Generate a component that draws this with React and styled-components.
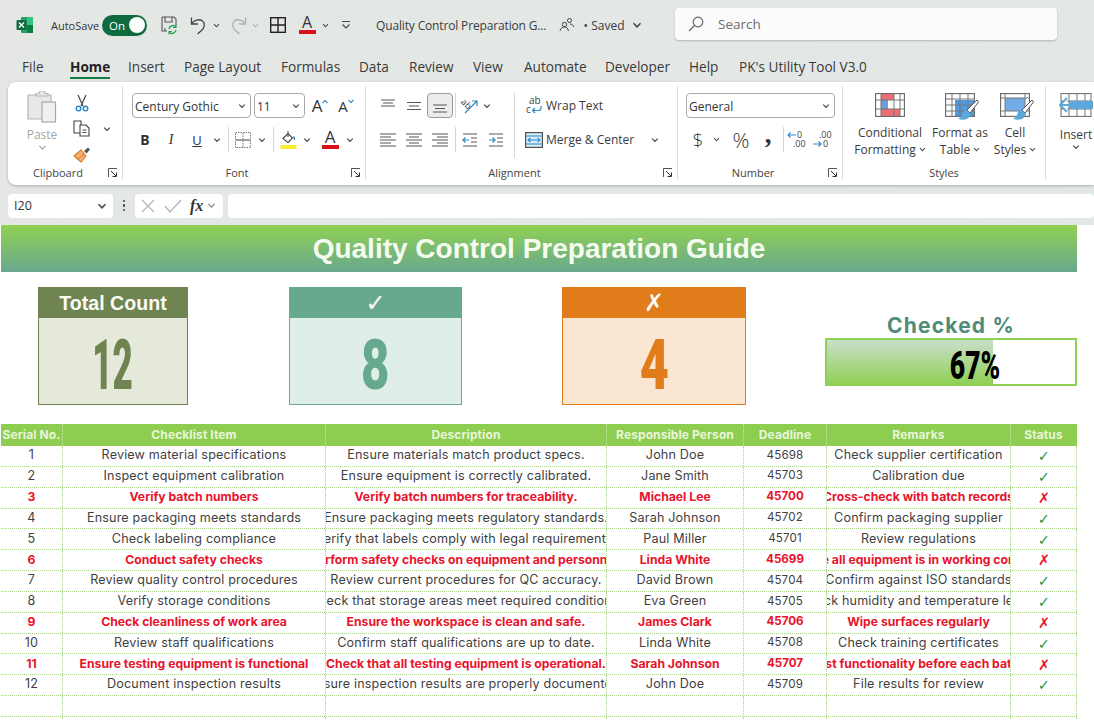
import React from "react";
import styled, { createGlobalStyle } from "styled-components";

const Global = createGlobalStyle`
  html, body { margin: 0; padding: 0; background: #fff; }
  body { width: 1094px; height: 720px; overflow: hidden; font-family: "Open Sans", "Noto Sans", sans-serif; color: #3a3a3a; }
  * { box-sizing: border-box; }
`;

const Page = styled.div`width: 1094px; height: 720px; overflow: hidden; display: flex; flex-direction: column; background: #fff;`;
const Chrome = styled.header`background: linear-gradient(90deg, #e4e7e4, #e2e8e6); flex: none;`;

const TitleBar = styled.div`height: 48px; display: flex; align-items: center; padding: 2px 0 0 16px;`;
const Slot = styled.span`
  flex: none; display: inline-flex; align-items: center; justify-content: ${p => p.$align || "center"};
  width: ${p => p.$w}px; margin-left: ${p => p.$ml || 0}px; height: ${p => p.$h || 24}px;
  font-size: ${p => p.$fs || 12}px; font-weight: ${p => p.$fw || 400}; color: ${p => p.$c || "#333"}; white-space: nowrap;
`;
const Toggle = styled.span`
  flex: none; width: 45px; height: 21px; border-radius: 11px; background: #0f6b3f; color: #fff; font-size: 11.5px;
  display: flex; align-items: center; justify-content: space-between; padding: 0 2px 0 7px;
  &::after { content: ""; width: 16px; height: 16px; border-radius: 50%; background: #fff; }
`;
const DocName = styled.span`flex: none; width: 172px; margin-left: 22px; font-size: 12px; letter-spacing: -.15px; color: #3c3c3c; white-space: nowrap;`;
const SearchBox = styled.div`
  flex: none; width: 382px; height: 32px; margin-left: 32px; margin-top: -2px; border-radius: 4px; background: #fbfbfb;
  box-shadow: 0 1px 2px rgba(0,0,0,.22); display: flex; align-items: center; padding-left: 13px; gap: 14px; color: #6d6d6d; font-size: 13.5px;
`;

const Tabs = styled.nav`height: 34px; display: flex; align-items: flex-start; padding: 9px 0 0 22px;`;
const Tab = styled.span`flex: none; width: ${p => p.$w}px; font-size: 13.6px; line-height: 20px; color: #3a3a3a;`;
const ActiveTab = styled(Tab)`
  font-weight: 700; color: #222;
  span { display: inline-block; border-bottom: 2.5px solid #107c41; }
`;

const RibbonWrap = styled.div`padding-left: 8px; height: 103px;`;
const Ribbon = styled.div`
  height: 103px; background: #fff; border-radius: 8px 0 0 8px; box-shadow: 0 1px 3px rgba(0,0,0,.25);
  display: flex; padding: 4px 0 5px; overflow: hidden;
`;
const Group = styled.section`
  flex: none; width: ${p => p.$w}px; display: flex; flex-direction: column;
  border-right: ${p => p.$last ? "none" : "1px solid #dcdcdc"};
`;
const GroupBody = styled.div`flex: 1; display: flex; padding: 7px 0 0 ${p => p.$pl || 0}px; min-height: 0;`;
const GroupFoot = styled.footer`height: 15px; display: flex; align-items: center; font-size: 11px; color: #444;`;
const GroupLabel = styled.span`flex: 1; text-align: center;`;
const Launcher = styled.span`flex: none; width: 14px; display: flex; align-items: center;`;
const Stack = styled.div`display: flex; flex-direction: column; gap: 9px; width: ${p => p.$w ? p.$w + "px" : "auto"}; height: ${p => p.$h ? p.$h + "px" : "auto"}; ${p => p.$divider ? "border-right:1px solid #d8d8d8;" : ""} ${p => p.$pl ? `padding-left:${p.$pl}px;` : ""}`;
const Row = styled.div`display: flex; align-items: center; height: 25px;`;
const Select = styled.div`
  flex: none; width: ${p => p.$w}px; height: 25px; margin-right: ${p => p.$mr || 0}px; border: 1px solid #a9a9a9; border-radius: 4px;
  display: flex; align-items: center; justify-content: space-between; padding: 1px 4px 0 2px; font-size: 12px; color: #333;
`;
const VSep = styled.span`flex: none; width: 1px; height: 25px; background: #d8d8d8; margin: 0 ${p => p.$m || 2}px;`;
const Selected = styled(Slot)`background: #ececec; border: 1px solid #9a9a9a; border-radius: 4px; height: 25px;`;
const PasteCol = styled.div`flex: none; width: 54px; margin-left: 7px; display: flex; flex-direction: column; align-items: center; margin-top: -2px; font-size: 12px; color: #a4a4a4;`;
const PasteLabel = styled.span`margin-top: 4px; line-height: 16px;`;
const ToolCol = styled.div`flex: none; display: flex; flex-direction: column; margin-top: -3px;`;
const BigBtn = styled.div`
  flex: none; width: ${p => p.$w}px; display: flex; flex-direction: column; align-items: center; font-size: 12px; line-height: 17px; color: #3a3a3a; white-space: nowrap;
`;
const BigBtnIcon = styled.span`height: ${p => p.$h || 31}px; display: flex; align-items: flex-start;`;
const WrapLabel = styled.span`font-size: 12px; color: #3a3a3a; margin-left: 3px; white-space: nowrap;`;
const Comma = styled.span`font: 700 27px/10px "Liberation Serif", serif; margin-top: -12px;`;
const BtnLine = styled.span`display: inline-flex; align-items: center; gap: 3px;`;

const FormulaBar = styled.div`height: 40px; display: flex; align-items: center; padding-left: 8px; padding-top: 1px;`;
const FBox = styled.div`
  flex: none; height: 24px; width: ${p => p.$w}px; margin-left: ${p => p.$ml || 0}px; background: #fff; border-radius: 4px; display: flex; align-items: center; font-size: 12.5px; color: #333;
  padding: 0 6px; justify-content: ${p => p.$j || "flex-start"};
`;
const FxBox = styled(FBox)`gap: 0; padding: 0 3px 0 5px;`;
const Dots = styled.span`flex: none; width: 22px; display: flex; justify-content: center; flex-direction: column; align-items: center; gap: 2px;
  i { width: 2.5px; height: 2.5px; background: #444; border-radius: 50%; display: block; }`;
const Fx = styled.span`font-family: "Liberation Serif", serif; font-style: italic; font-weight: 700; font-size: 16px; color: #333; margin: 0 4px 0 8px;`;

const Sheet = styled.main`flex: 1; min-height: 0; background: #fff; overflow: hidden; padding-left: 1px;`;
const Banner = styled.h1`
  margin: 0; width: 1076px; height: 47px; background: linear-gradient(180deg, #90d152, #68a88f);
  color: #f6fbf0; font: 700 28px/47px "Liberation Sans", Arial, sans-serif; text-align: center;
`;
const Kpis = styled.div`display: flex; height: 118px; margin: 15px 0 19px; padding-left: 37px;`;
const Card = styled.div`
  flex: none; width: ${p => p.$w}px; margin-right: ${p => p.$mr}px; height: 118px; background: ${p => p.$bg}; border: 1px solid ${p => p.$c}; display: flex; flex-direction: column; color: ${p => p.$c};
`;
const CardHead = styled.div`
  flex: none; height: 30px; background: ${p => p.$c}; color: #fbfbf6; text-align: center;
  font: 700 ${p => p.$symbol ? 24 : 19.6}px/30px ${p => p.$symbol ? '"DejaVu Sans"' : '"Liberation Sans"'}, sans-serif;
`;
const CardValue = styled.div`flex: 1; display: flex; align-items: center; justify-content: center; padding-top: 8px;`;
const Condensed = styled.span`
  display: inline-block; font-family: "Roboto", sans-serif; font-weight: 900; font-size: ${p => p.$fs}px; line-height: 1; transform: scaleX(${p => p.$sx}); color: ${p => p.$c || "inherit"};
`;
const Progress = styled.div`flex: none; width: 252px; display: flex; flex-direction: column; align-items: center; margin-top: 26px;`;
const ProgressTitle = styled.div`font: 700 21px/25px "Inter", sans-serif; color: #4f8c78; letter-spacing: 1.2px;`;
const Track = styled.div`width: 252px; height: 48px; border: 2px solid #8fd055; background: #fff; display: flex; align-items: stretch; position: relative;`;
const Fill = styled.div`height: 100%; background: linear-gradient(180deg, #c9dfca, #8fd055); flex: none;`;
const TrackLabel = styled.div`position: absolute; top: 7px; left: 0; right: 0; display: flex; justify-content: center; padding-left: 48px;`;

const Table = styled.div`width: 1076px;`;
const cols = "62px 263px 281px 137px 83px 184px 66px";
const HeadRow = styled.div`display: grid; grid-template-columns: ${cols}; height: 22px; background: #8dce51;`;
const HeadCell = styled.div`
  display: flex; align-items: center; justify-content: center; white-space: nowrap; overflow: hidden; color: #eaf6da;
  font: 700 12px/1 "Inter", sans-serif; letter-spacing: .1px; border-right: 1px dotted #c9e8a8;
  &:last-child { border-right: 1px solid #8dce51; }
`;
const BodyRow = styled.div`display: grid; grid-template-columns: ${cols}; height: 20.85px; border-bottom: 1px dotted #a9d78a;`;
const Cell = styled.div`
  display: flex; align-items: center; justify-content: center; overflow: hidden; white-space: nowrap; padding-bottom: 1px;
  border-right: 1px dotted #a9d78a; font: ${p => p.$bad ? 700 : 400} ${p => p.$num ? 11.6 : p.$bad ? 12.2 : 12.6}px/1 "Inter", sans-serif;
  letter-spacing: ${p => p.$bad ? 0 : .16}px; color: ${p => p.$bad ? "#e8142c" : "#3f3f3f"};
  span { flex: none; }
`;
const Mark = styled(Cell)`font: 700 14.5px/1 "DejaVu Sans", sans-serif; color: ${p => p.$bad ? "#e8142c" : "#1d9a4e"}; padding: 1px 0 0 1px;`;

const FontABox = styled.span`display: inline-flex; flex-direction: column; align-items: center;`;
const FontALetter = styled.span`font-size: ${p => p.$s}px; line-height: ${p => p.$s - 3}px; color: #333;`;
const FontABar = styled.span`width: ${p => p.$w}px; height: 4px; background: ${p => p.$c}; display: block; margin-top: 1px;`;
const GrowBox = styled.span`display: inline-flex; align-items: flex-start;`;
const GrowLetter = styled.span`font-size: ${p => p.$up ? 17 : 15}px; line-height: 18px; color: #333;`;
const Bold = styled.span`font: 700 14px "Noto Sans", sans-serif; color: #333;`;
const Ital = styled.span`font: italic 400 14px "Liberation Serif", serif; color: #333;`;
const Under = styled.span`font-size: 13px; color: #333; text-decoration: underline;`;
const BrushOver = styled.span`position: relative; display: inline-flex; height: 24px;`;
const BrushMark = styled.svg`position: absolute; right: -4px; bottom: -5px;`;
const OpenSvg = styled.svg`overflow: visible;`;

const Chev = ({ s = 8, c = "#444" }) => (
  <svg width={s} height={s} viewBox="0 0 10 10" fill="none"><path d="M1.5 3.2 5 6.8l3.5-3.6" stroke={c} strokeWidth="1.5" /></svg>
);
const Excel = () => (
  <svg width="18" height="18" viewBox="0 0 18 18"><rect x="5" y="1" width="12" height="16" rx="1" fill="#21a366" /><rect x="11" y="1" width="6" height="8" fill="#33c481" /><rect x="11" y="9" width="6" height="8" fill="#107c41" /><rect x="0.5" y="4" width="10" height="10" rx="1" fill="#0f6b3f" /><path d="M3 6.5 8 11.5M8 6.5 3 11.5" stroke="#fff" strokeWidth="1.4" /></svg>
);
const SaveSync = () => (
  <svg width="18" height="20" viewBox="0 0 18 20" fill="none" stroke="#555" strokeWidth="1.1"><path d="M2 2h12l2 2v6M2 2v14h5M5 2v5h7V2M5 16v-3" /><path d="M9 14a4 4 0 0 1 7-2M16 15a4 4 0 0 1-7 2" stroke="#2fa45b" strokeWidth="1.4" /><path d="M16 9.5v3h-3M9 19.5v-3h3" stroke="#2fa45b" strokeWidth="1.2" /></svg>
);
const Undo = ({ c = "#444", flip }) => (
  <svg width="16" height="19" viewBox="0 0 16 19" fill="none" stroke={c} strokeWidth="1.3" style={flip ? { transform: "scaleX(-1)" } : undefined}><path d="M1.5 1.5v6.5h6.5" /><path d="M1.5 8C4 4 9 2.5 12.5 5c3 2.5 2 7-1 9.5L7.5 18" /></svg>
);
const GridIcon = () => (
  <svg width="16" height="16" viewBox="0 0 16 16" fill="none" stroke="#222" strokeWidth="1.4"><rect x=".7" y=".7" width="14.6" height="14.6" /><path d="M8 1v14M1 8h14" /></svg>
);
const FontA = ({ size = 16, bar = 17, col = "#d8101c" }) => (
  <FontABox>
    <FontALetter $s={size}>A</FontALetter>
    <FontABar $w={bar} $c={col} />
  </FontABox>
);
const Customize = () => (
  <svg width="10" height="10" viewBox="0 0 10 10" fill="none" stroke="#444" strokeWidth="1.1"><path d="M1 1.5h8M1.5 4.5 5 8l3.5-3.5" /></svg>
);
const People = () => (
  <svg width="16" height="16" viewBox="0 0 16 16" fill="none" stroke="#444" strokeWidth="1"><circle cx="5.5" cy="7.5" r="2.2" /><path d="M1 14c.6-3 2.5-4 4.5-4s3.2 1 4 4" /><circle cx="10.5" cy="3.5" r="2" /><path d="M11 7c1.8 0 3.2.9 3.8 3" /></svg>
);
const SearchIcon = () => (
  <svg width="16" height="16" viewBox="0 0 16 16" fill="none" stroke="#666" strokeWidth="1.2"><circle cx="10" cy="6" r="4.8" /><path d="M6.5 9.5 1 15" /></svg>
);
const PasteIcon = () => (
  <svg width="30" height="32" viewBox="0 0 30 32" fill="none" stroke="#b5b5b5" strokeWidth="1.2"><path d="M6 4h18v24H1V4h5z" fill="#e8e8e8" /><path d="M9 5V2.5h3a3 3 0 0 1 6 0h3V5z" fill="#e8e8e8" /><rect x="15" y="11" width="13.5" height="20" fill="#f0f0f0" stroke="#a9a9a9" /></svg>
);
const Scissors = () => (
  <svg width="14" height="18" viewBox="0 0 14 18" fill="none"><path d="M3 1l5 11M11 1 6 12" stroke="#444" strokeWidth="1.2" /><circle cx="3.5" cy="14.5" r="2.3" stroke="#2b88c6" strokeWidth="1.4" /><circle cx="10.5" cy="14.5" r="2.3" stroke="#2b88c6" strokeWidth="1.4" /></svg>
);
const CopyIcon = () => (
  <svg width="18" height="17" viewBox="0 0 18 17" fill="none" stroke="#444" strokeWidth="1.1"><path d="M1 1h7v12H1z" /><path d="M7 5h6l3 3v8H7z" fill="#fff" /><path d="M9.5 10h4M9.5 12.5h4" /></svg>
);
const Brush = () => (
  <svg width="18" height="17" viewBox="0 0 18 17" fill="none"><path d="M1 10 8 4l5 6-5 6z" fill="#f3b27a" stroke="#d9761c" strokeWidth="1.1" /><path d="M5 13l6-5" stroke="#d9761c" /><path d="M11 5 15 1.5l2 2-3.5 4z" fill="#555" /></svg>
);
const GrowA = ({ up }) => (
  <GrowBox>
    <GrowLetter $up={up}>A</GrowLetter>
    <svg width="6" height="5" viewBox="0 0 6 5" fill="none" stroke="#3a8cc8" strokeWidth="1.1" style={{ marginTop: 2 }}><path d={up ? "M.5 4 3 1.5 5.5 4" : "M.5 1 3 3.5 5.5 1"} /></svg>
  </GrowBox>
);
const BordersIcon = () => (
  <svg width="16" height="16" viewBox="0 0 16 16" fill="none" stroke="#777" strokeWidth="1" strokeDasharray="1.5 1"><rect x=".5" y=".5" width="15" height="15" /><path d="M8 1v14" /><path d="M1 8h14" strokeDasharray="none" stroke="#444" /></svg>
);
const FillIcon = () => (
  <svg width="17" height="19" viewBox="0 0 17 19" fill="none"><path d="M3 8.5 8 3.5l4.5 4.5L8 12.5z" stroke="#444" strokeWidth="1.1" /><path d="M8 1v6" stroke="#444" /><path d="M13.5 6.5c1 1.5 1.5 2.5 1 3.5" stroke="#2b88c6" strokeWidth="1.5" /><rect x=".5" y="15" width="16" height="4" fill="#f8ec30" /></svg>
);
const Lines = ({ rows }) => (
  <svg width="16" height="14" viewBox="0 0 16 14" fill="none" stroke="#555" strokeWidth="1.2">
    {rows.map(([a, b, y], i) => <path key={i} d={`M${a} ${y}H${b}`} />)}
  </svg>
);
const AL = {
  top: [[1, 15, 1], [3, 13, 4], [1, 15, 7]],
  mid: [[1, 15, 3.5], [3, 13, 7], [1, 15, 10.5]],
  bot: [[1, 15, 6], [3, 13, 9.5], [1, 15, 13]],
  left: [[0, 16, 1], [0, 11, 4], [0, 16, 7], [0, 11, 10], [0, 16, 13]],
  center: [[0, 16, 1], [3, 13, 4], [0, 16, 7], [3, 13, 10], [0, 16, 13]],
  right: [[0, 16, 1], [5, 16, 4], [0, 16, 7], [5, 16, 10], [0, 16, 13]],
};
const Orient = () => (
  <OpenSvg width="20" height="20" viewBox="0 0 20 20" fill="none"><path d="M5 17 17 5M12 5h5v5" stroke="#2b88c6" strokeWidth="1.2" /><text x="1" y="11" fontSize="9" fill="#444" fontFamily="Open Sans" transform="rotate(45 6 8)">ab</text></OpenSvg>
);
const Indent = ({ rev }) => (
  <svg width="16" height="14" viewBox="0 0 16 14" fill="none" stroke="#555" strokeWidth="1.2"><path d="M1 1h14M9 5h6M9 9h6M1 13h14" /><path d={rev ? "M1 7h6M3.5 4.5 1 7l2.5 2.5" : "M1 7h6M4.5 4.5 7 7 4.5 9.5"} stroke="#2b88c6" /></svg>
);
const WrapIcon = () => (
  <OpenSvg width="17" height="21" viewBox="0 0 17 21" fill="none"><text x="3" y="9" fontSize="10" fill="#444" fontFamily="Open Sans">ab</text><text x="0" y="18" fontSize="10" fill="#444" fontFamily="Open Sans">c</text><path d="M15 11v2a2.5 2.5 0 0 1-2.5 2.5H7M9 13l-2.5 2.5L9 18" stroke="#2b88c6" strokeWidth="1.2" /></OpenSvg>
);
const MergeIcon = () => (
  <svg width="18" height="16" viewBox="0 0 18 16" fill="none"><rect x=".6" y=".6" width="16.8" height="14.8" stroke="#444" strokeWidth="1.1" fill="#d6ecf9" /><path d="M1 4h16M1 12h16" stroke="#2b88c6" /><path d="M3 8h12M5.5 5.8 3 8l2.5 2.2M12.5 5.8 15 8l-2.5 2.2" stroke="#2b88c6" strokeWidth="1.1" /></svg>
);
const Decimal = ({ more }) => (
  <OpenSvg width="24" height="22" viewBox="0 0 24 22" fill="none">
    <text x={more ? 7 : 11} y="9" fontSize="9" fill="#444" fontFamily="Open Sans">{more ? ".00" : "0"}</text>
    <text x={more ? 11 : 7} y="18" fontSize="9" fill="#444" fontFamily="Open Sans">{more ? "0" : ".00"}</text>
    <path d={more ? "M1 15h8M6.5 12.5 9 15l-2.5 2.5" : "M2 6h8M4.5 3.5 2 6l2.5 2.5"} stroke="#2b88c6" strokeWidth="1.1" />
  </OpenSvg>
);
const LaunchIcon = () => (
  <svg width="10" height="10" viewBox="0 0 10 10" fill="none" stroke="#555" strokeWidth="1"><path d="M.5 9V.5H9" /><path d="M3 3l5 5M8.5 4.5v4h-4" stroke="#333" /></svg>
);
const GridBase = ({ w = 30, h = 24, children, cols = [6, 12, 18, 24], rows = [6, 12, 18] }) => (
  <svg width={w} height={h} viewBox={`0 0 ${w} ${h}`} fill="none">
    {children}
    <rect x=".6" y=".6" width={w - 1.2} height={h - 1.2} stroke="#666" strokeWidth="1.1" />
    {cols.map(x => <path key={x} d={`M${x} 1V${h - 1}`} stroke="#777" />)}
    {rows.map(y => <path key={y} d={`M1 ${y}H${w - 1}`} stroke="#777" />)}
  </svg>
);
const CondIcon = () => (
  <GridBase cols={[6, 19, 25]} rows={[7, 16]}>
    <rect x="6" y="1" width="13" height="6" fill="#f06d78" />
    <rect x="6" y="7" width="7" height="9" fill="#6f9ed6" />
    <rect x="6" y="16" width="19" height="7" fill="#f06d78" />
  </GridBase>
);
const PaintBrush = () => (
  <BrushMark width="26" height="24" viewBox="0 0 26 24" fill="none">
    <path d="M24 2 14 12l3 3L25.5 4z" fill="#fff" stroke="#555" />
    <path d="M14 12c-3 0-4.5 2-5 5-.5 2-2 3-4 3.5 3.500 2 9 1.500 11-1 1.500-2 1.500-4 1-4.500z" fill="#5ca8dd" />
  </BrushMark>
);
const TableIcon = () => (
  <BrushOver>
    <GridBase cols={[7, 15, 23]} rows={[6, 12, 18]}>
      <rect x="10" y="7" width="19" height="16" fill="#4f9be0" />
    </GridBase>
    <PaintBrush />
  </BrushOver>
);
const CellIcon = () => (
  <BrushOver>
    <GridBase cols={[5, 25]} rows={[5, 18]}>
      <rect x="5" y="5" width="20" height="13" fill="#72ace6" />
    </GridBase>
    <PaintBrush />
  </BrushOver>
);
const InsertIcon = () => (
  <svg width="34" height="24" viewBox="0 0 34 24" fill="none">
    <rect x="2" y=".6" width="30" height="22.8" stroke="#666" />
    <path d="M10 1v22M18 1v22M26 1v22M2 8h30M2 16h30" stroke="#777" />
    <rect x="10" y="8" width="24" height="8" fill="#5ca8dd" />
    <path d="M16 12H2M8 5 1 12l7 7" stroke="#5ca8dd" strokeWidth="2" fill="#fff" />
  </svg>
);
const XIcon = () => <svg width="16" height="16" viewBox="0 0 16 16" stroke="#b4b4b4" strokeWidth="1.2"><path d="M2 2l12 12M14 2 2 14" /></svg>;
const CheckIcon = () => <svg width="18" height="14" viewBox="0 0 18 14" fill="none" stroke="#b4b4b4" strokeWidth="1.2"><path d="M1 7l5 6L17 1" /></svg>;

const tabs = [["Insert", 56], ["Page Layout", 97], ["Formulas", 78], ["Data", 50], ["Review", 64], ["View", 51], ["Automate", 81], ["Developer", 84], ["Help", 50], ["PK's Utility Tool V3.0", 140]];
const heads = ["Serial No.", "Checklist Item", "Description", "Responsible Person", "Deadline", "Remarks", "Status"];
const rows = [
  ["Review material specifications", "Ensure materials match product specs.", "John Doe", 45698, "Check supplier certification"],
  ["Inspect equipment calibration", "Ensure equipment is correctly calibrated.", "Jane Smith", 45703, "Calibration due"],
  ["Verify batch numbers", "Verify batch numbers for traceability.", "Michael Lee", 45700, "Cross-check with batch records", 1],
  ["Ensure packaging meets standards", "Ensure packaging meets regulatory standards.", "Sarah Johnson", 45702, "Confirm packaging supplier"],
  ["Check labeling compliance", "Verify that labels comply with legal requirements.", "Paul Miller", 45701, "Review regulations"],
  ["Conduct safety checks", "Perform safety checks on equipment and personnel.", "Linda White", 45699, "Ensure all equipment is in working condition", 1],
  ["Review quality control procedures", "Review current procedures for QC accuracy.", "David Brown", 45704, "Confirm against ISO standards"],
  ["Verify storage conditions", "Check that storage areas meet required conditions.", "Eva Green", 45705, "Check humidity and temperature levels"],
  ["Check cleanliness of work area", "Ensure the workspace is clean and safe.", "James Clark", 45706, "Wipe surfaces regularly", 1],
  ["Review staff qualifications", "Confirm staff qualifications are up to date.", "Linda White", 45708, "Check training certificates"],
  ["Ensure testing equipment is functional", "Check that all testing equipment is operational.", "Sarah Johnson", 45707, "Test functionality before each batch", 1],
  ["Document inspection results", "Ensure inspection results are properly documented.", "John Doe", 45709, "File results for review"],
];

export default function App() {
  return (
    <Page>
      <Global />
      <Chrome>
        <TitleBar>
          <Slot $w={18}><Excel /></Slot>
          <Slot $w={51} $ml={17} $align="flex-start" $fs={11}>AutoSave</Slot>
          <Toggle>On</Toggle>
          <Slot $w={24} $ml={10}><SaveSync /></Slot>
          <Slot $w={24} $ml={5}><Undo /></Slot>
          <Slot $w={12}><Chev s={7} /></Slot>
          <Slot $w={24} $ml={5}><Undo c="#b0b0b0" flip /></Slot>
          <Slot $w={8}><Chev s={7} c="#b0b0b0" /></Slot>
          <Slot $w={24} $ml={7}><GridIcon /></Slot>
          <Slot $w={24} $ml={5}><FontA size={16} bar={17} /></Slot>
          <Slot $w={12}><Chev s={7} /></Slot>
          <Slot $w={16} $ml={7}><Customize /></Slot>
          <DocName>Quality Control Preparation G...</DocName>
          <Slot $w={16} $ml={11}><People /></Slot>
          <Slot $w={46} $ml={6} $fs={12} $c="#3c3c3c">• Saved</Slot>
          <Slot $w={12} $ml={4}><Chev s={10} /></Slot>
          <SearchBox><SearchIcon />Search</SearchBox>
        </TitleBar>
        <Tabs>
          <Tab $w={48}>File</Tab>
          <ActiveTab $w={58}><span>Home</span></ActiveTab>
          {tabs.map(([t, w]) => <Tab key={t} $w={w}>{t}</Tab>)}
        </Tabs>
        <RibbonWrap>
          <Ribbon>
            <Group $w={115}>
              <GroupBody>
                <PasteCol><PasteIcon /><PasteLabel>Paste</PasteLabel><Chev s={9} c="#aaa" /></PasteCol>
                <ToolCol>
                  <Slot $w={26} $h={26}><Scissors /></Slot>
                  <Row><Slot $w={26} $h={26}><CopyIcon /></Slot><Slot $w={24}><Chev /></Slot></Row>
                  <Slot $w={26} $h={26}><Brush /></Slot>
                </ToolCol>
              </GroupBody>
              <GroupFoot><GroupLabel>Clipboard</GroupLabel><Launcher><LaunchIcon /></Launcher></GroupFoot>
            </Group>

            <Group $w={243}>
              <GroupBody $pl={9}>
                <Stack>
                  <Row>
                    <Select $w={119} $mr={3}>Century Gothic<Chev /></Select>
                    <Select $w={51}>11<Chev /></Select>
                    <Slot $w={26} $ml={2}><GrowA up /></Slot>
                    <Slot $w={26}><GrowA /></Slot>
                  </Row>
                  <Row>
                    <Slot $w={26}><Bold>B</Bold></Slot>
                    <Slot $w={26}><Ital>I</Ital></Slot>
                    <Slot $w={26}><Under>U</Under></Slot>
                    <Slot $w={14}><Chev /></Slot>
                    <VSep $m={3.5} />
                    <Slot $w={22}><BordersIcon /></Slot>
                    <Slot $w={16}><Chev /></Slot>
                    <VSep $m={2.5} />
                    <Slot $w={24}><FillIcon /></Slot>
                    <Slot $w={14}><Chev /></Slot>
                    <Slot $w={32}><FontA size={17} bar={17} /></Slot>
                    <Slot $w={8}><Chev /></Slot>
                  </Row>
                </Stack>
              </GroupBody>
              <GroupFoot><GroupLabel>Font</GroupLabel><Launcher><LaunchIcon /></Launcher></GroupFoot>
            </Group>

            <Group $w={312}>
              <GroupBody $pl={9}>
                <Stack $w={140} $h={65} $divider>
                  <Row>
                    <Slot $w={26}><Lines rows={AL.top} /></Slot>
                    <Slot $w={26}><Lines rows={AL.mid} /></Slot>
                    <Selected $w={26}><Lines rows={AL.bot} /></Selected>
                    <VSep $m={1.5} />
                    <Slot $w={26}><Orient /></Slot>
                    <Slot $w={8}><Chev /></Slot>
                  </Row>
                  <Row>
                    <Slot $w={26}><Lines rows={AL.left} /></Slot>
                    <Slot $w={26}><Lines rows={AL.center} /></Slot>
                    <Slot $w={26}><Lines rows={AL.right} /></Slot>
                    <VSep $m={1.5} />
                    <Slot $w={26}><Indent rev /></Slot>
                    <Slot $w={26}><Indent /></Slot>
                  </Row>
                </Stack>
                <Stack $pl={10}>
                  <Row><Slot $w={18}><WrapIcon /></Slot><WrapLabel>Wrap Text</WrapLabel></Row>
                  <Row><Slot $w={18}><MergeIcon /></Slot><WrapLabel>Merge &amp; Center</WrapLabel><Slot $w={10} $ml={16}><Chev /></Slot></Row>
                </Stack>
              </GroupBody>
              <GroupFoot><GroupLabel>Alignment</GroupLabel><Launcher><LaunchIcon /></Launcher></GroupFoot>
            </Group>

            <Group $w={165}>
              <GroupBody $pl={8}>
                <Stack>
                  <Row><Select $w={149}>General<Chev /></Select></Row>
                  <Row>
                    <Slot $w={24} $fs={19} $fw={300}>$</Slot>
                    <Slot $w={12}><Chev s={7} /></Slot>
                    <Slot $w={24} $ml={7} $fs={21} $fw={300}>%</Slot>
                    <Slot $w={24} $ml={3}><Comma>,</Comma></Slot>
                    <VSep $m={2.5} />
                    <Slot $w={24}><Decimal /></Slot>
                    <Slot $w={24} $ml={2}><Decimal more /></Slot>
                  </Row>
                </Stack>
              </GroupBody>
              <GroupFoot><GroupLabel>Number</GroupLabel><Launcher><LaunchIcon /></Launcher></GroupFoot>
            </Group>

            <Group $w={203}>
              <GroupBody $pl={5}>
                <BigBtn $w={84}><BigBtnIcon><CondIcon /></BigBtnIcon>Conditional<BtnLine>Formatting <Chev s={7} /></BtnLine></BigBtn>
                <BigBtn $w={56}><BigBtnIcon><TableIcon /></BigBtnIcon>Format as<BtnLine>Table <Chev s={7} /></BtnLine></BigBtn>
                <BigBtn $w={54}><BigBtnIcon><CellIcon /></BigBtnIcon>Cell<BtnLine>Styles <Chev s={7} /></BtnLine></BigBtn>
              </GroupBody>
              <GroupFoot><GroupLabel>Styles</GroupLabel></GroupFoot>
            </Group>

            <Group $w={60} $last>
              <GroupBody $pl={13}>
                <BigBtn $w={34}><BigBtnIcon $h={33}><InsertIcon /></BigBtnIcon>Insert<Chev /></BigBtn>
              </GroupBody>
            </Group>
          </Ribbon>
        </RibbonWrap>
        <FormulaBar>
          <FBox $w={105} $j="space-between">I20<Chev s={10} /></FBox>
          <Dots><i /><i /><i /></Dots>
          <FxBox $w={88}><XIcon /><Slot $w={8} /><CheckIcon /><Fx>fx</Fx><Chev s={9} c="#888" /></FxBox>
          <FBox $w={866} $ml={5} />
        </FormulaBar>
      </Chrome>
      <Sheet>
        <Banner>Quality Control Preparation Guide</Banner>
        <Kpis>
          <Card $w={150} $mr={101} $c="#6f8450" $bg="#e4e9da">
            <CardHead $c="#6f8450">Total Count</CardHead>
            <CardValue><Condensed $fs={70} $sx={0.5}>12</Condensed></CardValue>
          </Card>
          <Card $w={173} $mr={100} $c="#67a98f" $bg="#e0eee9">
            <CardHead $c="#67a98f" $symbol>✓</CardHead>
            <CardValue><Condensed $fs={70} $sx={0.7}>8</Condensed></CardValue>
          </Card>
          <Card $w={184} $mr={79} $c="#e07c1a" $bg="#fbe6d2">
            <CardHead $c="#e07c1a" $symbol>✗</CardHead>
            <CardValue><Condensed $fs={70} $sx={0.72}>4</Condensed></CardValue>
          </Card>
          <Progress>
            <ProgressTitle>Checked %</ProgressTitle>
            <Track>
              <Fill style={{ width: "67%" }} />
              <TrackLabel><Condensed $fs={39} $sx={0.68} $c="#000">67%</Condensed></TrackLabel>
            </Track>
          </Progress>
        </Kpis>
        <Table>
          <HeadRow>{heads.map(h => <HeadCell key={h}>{h}</HeadCell>)}</HeadRow>
          {rows.map((r, i) => {
            const bad = !!r[5];
            return (
              <BodyRow key={i}>
                <Cell $bad={bad}><span>{i + 1}</span></Cell>
                {r.slice(0, 5).map((t, j) => <Cell key={j} $bad={bad} $num={j === 3}><span>{t}</span></Cell>)}
                <Mark $bad={bad}><span>{bad ? "✗" : "✓"}</span></Mark>
              </BodyRow>
            );
          })}
          {[0, 1].map(i => (
            <BodyRow key={i}>{heads.map(h => <Cell key={h} />)}</BodyRow>
          ))}
        </Table>
      </Sheet>
    </Page>
  );
}
